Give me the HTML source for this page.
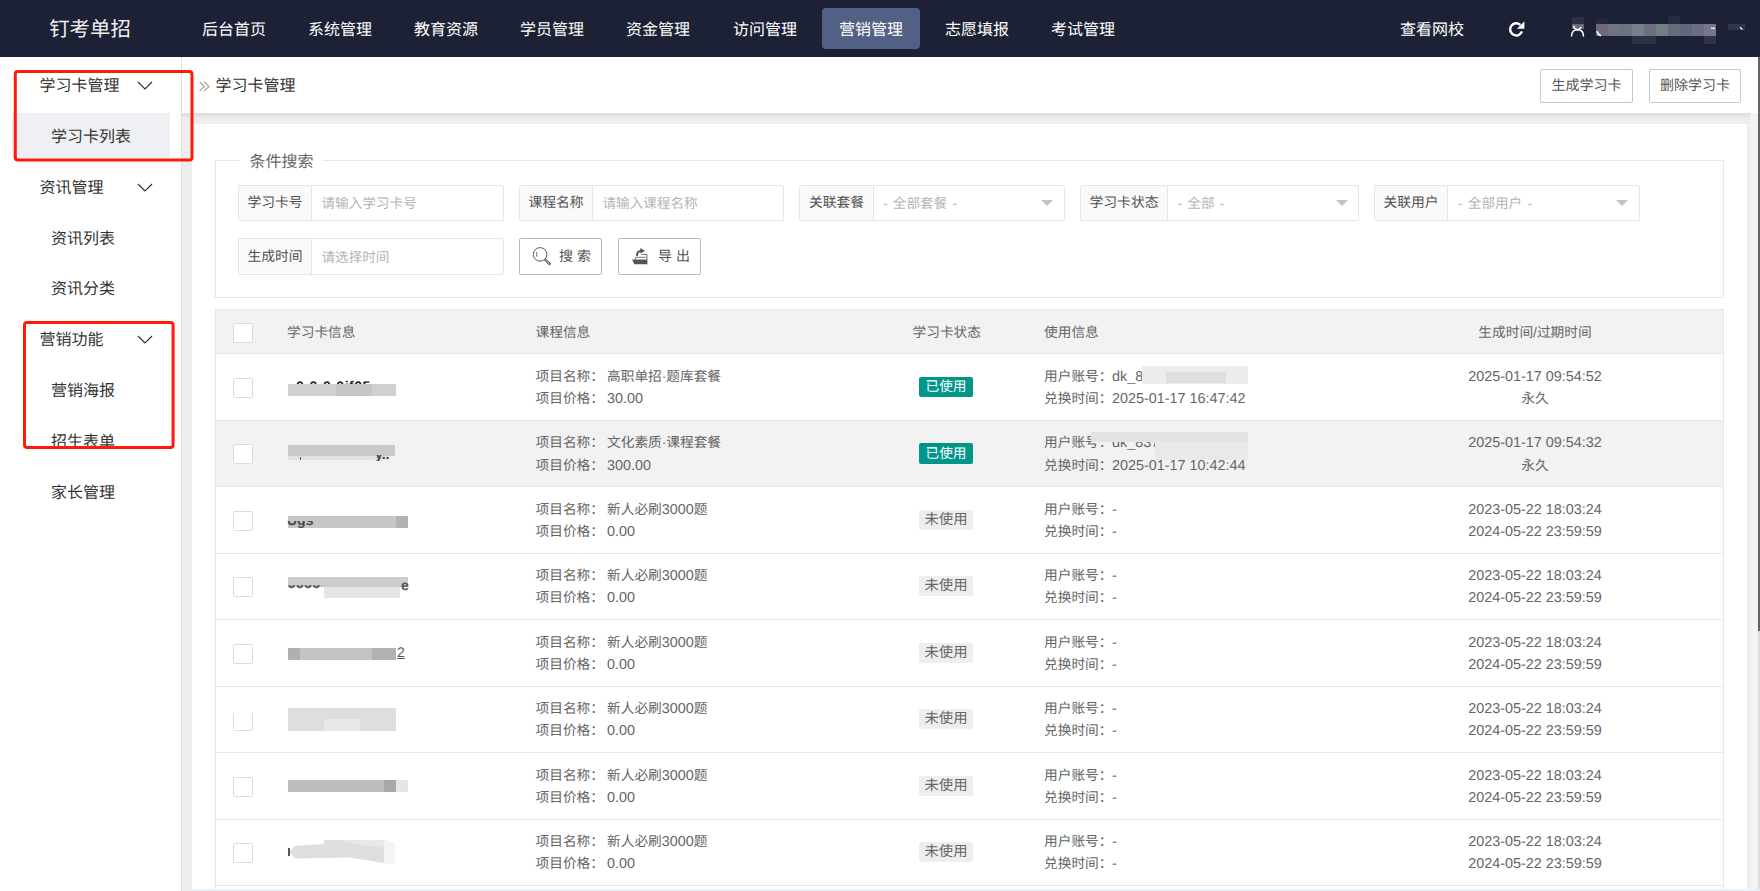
<!DOCTYPE html>
<html lang="zh-CN">
<head>
<meta charset="utf-8">
<title>学习卡管理</title>
<style>
*{box-sizing:border-box;margin:0;padding:0}
html,body{width:1760px;height:891px;overflow:hidden;background:#eee;}
body{font-family:"Liberation Sans",sans-serif;font-size:14px;color:#666;position:relative;text-rendering:geometricPrecision;}
.abs{position:absolute}
/* header */
#hdr{position:absolute;left:0;top:0;width:1760px;height:57px;background:#1d2135;}
#logo{position:absolute;left:0;top:0;width:181px;height:57px;line-height:61px;text-align:center;color:#f2f2f2;font-size:20.4px;border-right:1px solid #1a1d2f;}
.nav{position:absolute;top:8px;height:41px;width:98px;line-height:46px;text-align:center;color:#fff;font-size:16px;border-radius:4px;}
.nav.on{background:#526083;}
.hr{position:absolute;top:0;height:57px;line-height:62px;color:#fff;font-size:16px;}
/* sidebar */
#side{position:absolute;left:0;top:57px;width:181px;height:834px;background:#fff;z-index:2;}
#sideln{position:absolute;left:181px;top:57px;width:1px;height:834px;background:#dedede;z-index:2;}
.mg{z-index:3;position:absolute;left:39.5px;font-size:16px;color:#333;height:24px;line-height:24px;}
.mi{z-index:3;position:absolute;left:51px;font-size:16px;color:#333;height:24px;line-height:24px;}
.chev{z-index:3;position:absolute;left:137px;width:16px;height:9px;}
.red{position:absolute;border:2.4px solid #fb1d1d;border-radius:4px;}
/* breadcrumb */
#bc{position:absolute;left:181px;top:57px;width:1577px;height:56px;background:#fff;box-shadow:0 2px 5px rgba(0,0,0,.1);}
.tbtn{position:absolute;top:12px;height:34px;border:1px solid #c9c9c9;border-radius:2px;background:#fff;color:#555;font-size:14px;line-height:31px;text-align:center;}
/* panel */
#panel{position:absolute;left:192px;top:124px;width:1555px;height:767px;background:#fff;}
#fs{position:absolute;left:215px;top:160px;width:1509px;height:138px;border:1px solid #e6e6e6;}
#lg{position:absolute;left:240px;top:150.7px;height:24px;line-height:24px;padding:0 9.5px;background:#fff;font-size:16px;color:#666;}
.grp{position:absolute;height:36px;border:1px solid #e6e6e6;border-radius:2px;background:#fff;}
.grp .lb{position:absolute;left:0;top:0;height:34px;line-height:34.5px;text-align:center;background:#fafafa;border-right:1px solid #e6e6e6;color:#525252;font-size:13.8px;}
.grp .ph{position:absolute;top:0;height:34px;line-height:36px;color:#b4b4b4;font-size:13.6px;}
.grp .car{position:absolute;top:14px;width:0;height:0;border-left:6px solid transparent;border-right:6px solid transparent;border-top:6px solid #c2c2c2;}
.sbtn{position:absolute;top:238px;height:37px;width:83px;border:1px solid #b9b9b9;border-radius:2px;background:#fff;color:#555;font-size:14px;}
/* table */
#th{position:absolute;left:215px;top:309px;width:1509px;height:45px;background:#f2f2f2;border:1px solid #e6e6e6;}
.h{position:absolute;top:323px;height:20px;line-height:20px;font-size:13.7px;color:#666;white-space:nowrap;}
.row{position:absolute;left:215px;width:1509px;height:67.5px;border-left:1px solid #e6e6e6;border-right:1px solid #e6e6e6;border-bottom:1px solid #e6e6e6;}
.row.alt{background:#f2f2f2;}
.cb{position:absolute;left:17px;width:20px;height:20px;border:1px solid #dbdbdb;border-radius:1.5px;background:#fff;}
.t{position:absolute;height:22px;line-height:22px;font-size:13.7px;color:#666;white-space:nowrap;}
.bd{position:absolute;left:703px;width:54px;height:20px;line-height:20px;border-radius:2px;text-align:center;font-size:13.7px;}
.bd.g{background:#009688;color:#fff;}
.bd.n{background:#eee;color:#666;}
.dc{position:absolute;left:1131px;width:376px;text-align:center;height:22px;line-height:22px;font-size:13.7px;color:#666;white-space:nowrap;}
.mz{position:absolute;}
.g2 .lb,.g2 .ph{height:35px !important}
.g2 .lb{line-height:36px !important}
.g2 .ph{line-height:37px !important}
.n{font-size:14.4px}
</style>
</head>
<body>
<!-- HEADER -->
<div id="hdr">
  <div id="logo">钉考单招</div>
  <div class="nav" style="left:185px">后台首页</div>
  <div class="nav" style="left:291px">系统管理</div>
  <div class="nav" style="left:397px">教育资源</div>
  <div class="nav" style="left:503px">学员管理</div>
  <div class="nav" style="left:609px">资金管理</div>
  <div class="nav" style="left:716px">访问管理</div>
  <div class="nav on" style="left:822px">营销管理</div>
  <div class="nav" style="left:928px">志愿填报</div>
  <div class="nav" style="left:1034px">考试管理</div>
  <div class="hr" style="left:1400px">查看网校</div>
  <svg class="abs" style="left:0;top:0" width="1760" height="57" viewBox="0 0 1760 57">
    <path d="M1522.0 31.4 A6.1 6.1 0 1 1 1520.3 24.8" fill="none" stroke="#fff" stroke-width="2.4"/>
    <path d="M1524.4 21.2 V28.7 H1517 Z" fill="#fff"/>
    <rect x="1572" y="17" width="12" height="7" fill="#2b3044"/>
    <rect x="1572" y="24" width="12" height="5" fill="#676778"/>
    <path d="M1571.5 36.4 C1571.5 31.6 1574 29.7 1577.5 29.7 C1581 29.7 1583.5 31.6 1583.5 36.4" fill="none" stroke="#fff" stroke-width="1.5"/>
    <path d="M1573.6 25.8 C1574.2 28.2 1575.8 29.7 1577.5 29.7 C1579.2 29.7 1580.6 28.6 1581.2 26.8" fill="none" stroke="#fff" stroke-width="1.5"/>
    <rect x="1596" y="18" width="12" height="6" fill="#25283c"/>
    <rect x="1668" y="16" width="12" height="8" fill="#272b40"/>
    <rect x="1596" y="24" width="12" height="12" fill="#6e6878"/><rect x="1608" y="24" width="12" height="12" fill="#6f7384"/><rect x="1620" y="24" width="12" height="12" fill="#6c7380"/><rect x="1632" y="24" width="12" height="12" fill="#74808a"/><rect x="1644" y="24" width="12" height="12" fill="#6c7080"/><rect x="1656" y="24" width="12" height="12" fill="#6f8080"/><rect x="1668" y="24" width="12" height="12" fill="#676c7c"/><rect x="1680" y="24" width="12" height="12" fill="#62677a"/><rect x="1692" y="24" width="12" height="12" fill="#6a6e84"/><rect x="1704" y="24" width="12" height="12" fill="#787688"/>
    <path d="M1597 31 C1597.6 33.6 1599 35.2 1601 35.6" fill="none" stroke="#fff" stroke-width="1.6"/>
    <rect x="1632" y="36" width="24" height="8" fill="#2c3146"/>
    <rect x="1704" y="36" width="12" height="8" fill="#30344a"/>
    <rect x="1711" y="27.5" width="4" height="1.6" fill="#e8e8ee"/>
    <rect x="1728" y="24" width="17" height="6" fill="#30354a"/>
    <path d="M1740 27.2 L1742.5 29.6" stroke="#fff" stroke-width="1.2"/>
  </svg>
</div>

<!-- SIDEBAR -->
<div id="side"></div><div id="sideln"></div>
<div class="abs" style="left:12px;top:113px;width:158px;height:45px;background:#eff0f4;z-index:3"></div>
<div class="mg" style="top:75px">学习卡管理</div>
<div class="mi" style="top:125.5px">学习卡列表</div>
<div class="mg" style="top:177px">资讯管理</div>
<div class="mi" style="top:228px">资讯列表</div>
<div class="mi" style="top:278px">资讯分类</div>
<div class="mg" style="top:329px">营销功能</div>
<div class="mi" style="top:379.5px">营销海报</div>
<div class="mi" style="top:430.5px;height:15.5px;overflow:hidden">招生表单</div>
<div class="mi" style="top:481.5px">家长管理</div>
<svg class="chev" style="top:81px" viewBox="0 0 16 9"><path d="M1 1 L8 8 L15 1" fill="none" stroke="#333" stroke-width="1.2"/></svg>
<svg class="chev" style="top:183px" viewBox="0 0 16 9"><path d="M1 1 L8 8 L15 1" fill="none" stroke="#333" stroke-width="1.2"/></svg>
<svg class="chev" style="top:335px" viewBox="0 0 16 9"><path d="M1 1 L8 8 L15 1" fill="none" stroke="#333" stroke-width="1.2"/></svg>

<!-- BREADCRUMB -->
<div id="bc">
  <svg class="abs" style="left:17px;top:23px" width="14" height="13" viewBox="198 80 14 13"><path d="M199.6 82 L204.4 86.5 L199.6 91 M204.2 82 L209 86.5 L204.2 91" fill="none" stroke="#a2a2a2" stroke-width="1.1"/></svg>
  <div class="abs" style="left:34.5px;top:18px;height:24px;line-height:24px;font-size:16px;color:#333">学习卡管理</div>
  <div class="tbtn" style="left:1359px;width:93px">生成学习卡</div>
  <div class="tbtn" style="left:1468px;width:92px">删除学习卡</div>
</div>

<!-- PANEL -->
<div id="panel"></div>
<div id="fs"></div>
<div id="lg">条件搜索</div>

<div class="grp" style="left:238px;top:185px;width:266px"><div class="lb" style="width:73px">学习卡号</div><div class="ph" style="left:82.5px">请输入学习卡号</div></div>
<div class="grp" style="left:519px;top:185px;width:265px"><div class="lb" style="width:73px">课程名称</div><div class="ph" style="left:82.5px">请输入课程名称</div></div>
<div class="grp" style="left:799px;top:185px;width:266px"><div class="lb" style="width:74px">关联套餐</div><div class="ph" style="left:83px;word-spacing:1.5px">- 全部套餐 -</div><div class="car" style="left:241px"></div></div>
<div class="grp" style="left:1080px;top:185px;width:279px"><div class="lb" style="width:87px">学习卡状态</div><div class="ph" style="left:96.5px;word-spacing:1.5px">- 全部 -</div><div class="car" style="left:255px"></div></div>
<div class="grp" style="left:1374px;top:185px;width:266px"><div class="lb" style="width:73px">关联用户</div><div class="ph" style="left:83px;word-spacing:1.5px">- 全部用户 -</div><div class="car" style="left:241px"></div></div>
<div class="grp g2" style="left:238px;top:238px;width:266px;height:37px"><div class="lb" style="width:73px">生成时间</div><div class="ph" style="left:82.5px">请选择时间</div></div>

<div class="sbtn" style="left:519px">
  <div class="abs" style="left:39px;top:0;height:35px;line-height:35px;white-space:pre">搜 索</div>
</div>
<div class="sbtn" style="left:618px">
  <div class="abs" style="left:39px;top:0;height:35px;line-height:35px;white-space:pre">导 出</div>
</div>

<svg class="abs" style="left:500px;top:230px" width="220" height="50" viewBox="500 230 220 50">
  <circle cx="540.1" cy="254.4" r="6.8" fill="none" stroke="#5a5a5a" stroke-width="1"/>
  <path d="M545.4 259.9 L549.6 264" stroke="#5a5a5a" stroke-width="2.5" stroke-linecap="round"/>
  <path d="M545.6 260.1 L549.4 263.8" stroke="#fff" stroke-width="0.7" stroke-linecap="round"/>
  <path d="M536.9 252.1 Q536.1 254.4 536.9 256.7" fill="none" stroke="#5a5a5a" stroke-width="0.9"/>
  <path d="M632.1 259.5 H647.4 V264.3 H634.3 Z" fill="#555"/>
  <path d="M635.6 259.5 V257.3 H645.6" fill="none" stroke="#666" stroke-width="0.9"/>
  <path d="M641.6 254.4 H646.9 V259.5" fill="none" stroke="#666" stroke-width="1"/>
  <path d="M636.9 256 C636.9 252.6 638.6 250.9 641.2 250.9" fill="none" stroke="#555" stroke-width="2"/>
  <path d="M640.3 247.9 L644.9 250.8 L640.5 253.7 Z" fill="#555"/>
</svg>

<!-- TABLE HEADER -->
<div id="th"><div class="cb" style="top:13px"></div></div>
<div class="h" style="left:287px">学习卡信息</div>
<div class="h" style="left:535.5px">课程信息</div>
<div class="h" style="left:912.5px">学习卡状态</div>
<div class="h" style="left:1044px">使用信息</div>
<div class="h" style="left:1347px;width:376px;text-align:center">生成时间/过期时间</div>

<!-- ROWS -->
<div id="rows">
<div class="row" style="top:354px;height:67px"><div class="cb" style="top:24px"></div><div class="t" style="left:319.5px;top:11.6px">项目名称：</div><div class="t" style="left:391px;top:11.6px">高职单招·题库套餐</div><div class="t" style="left:319.5px;top:33.6px">项目价格：</div><div class="t" style="left:391px;top:33.6px"><span class="n">30.00</span></div><div class="bd g" style="top:23px">已使用</div><div class="t" style="left:828px;top:11.6px">用户账号：</div><div class="t" style="left:896px;top:11.6px"><span class="n">dk_83</span></div><div class="t" style="left:828px;top:33.6px">兑换时间：</div><div class="t" style="left:896px;top:33.6px"><span class="n">2025-01-17 16:47:42</span></div><div class="dc" style="top:11.6px"><span class="n">2025-01-17 09:54:52</span></div><div class="dc" style="top:33.6px">永久</div><div class="t" style="left:80px;top:19px;font-weight:bold;color:#222;height:11px;line-height:27px;overflow:hidden;letter-spacing:0.5px;font-size:14px">0-0-0-0if05</div><div class="mz" style="left:72px;top:30px;width:108px;height:12px;background:#d0d0d0"></div><div class="mz" style="left:120px;top:30px;width:36px;height:12px;background:#c6c6c6"></div><div class="mz" style="left:926px;top:11.5px;width:106px;height:18px;background:#ececec"></div><div class="mz" style="left:950px;top:18px;width:60px;height:11px;background:#dedede"></div></div>
<div class="row alt" style="top:421px;height:66px"><div class="cb" style="top:23px"></div><div class="t" style="left:319.5px;top:10.5px">项目名称：</div><div class="t" style="left:391px;top:10.5px">文化素质·课程套餐</div><div class="t" style="left:319.5px;top:33.5px">项目价格：</div><div class="t" style="left:391px;top:33.5px"><span class="n">300.00</span></div><div class="bd g" style="top:22px;height:21px;line-height:21px">已使用</div><div class="t" style="left:828px;top:10.5px">用户账号：</div><div class="t" style="left:896px;top:10.5px"><span class="n">dk_8370</span></div><div class="t" style="left:828px;top:33.5px">兑换时间：</div><div class="t" style="left:896px;top:33.5px"><span class="n">2025-01-17 10:42:44</span></div><div class="dc" style="top:10.5px"><span class="n">2025-01-17 09:54:32</span></div><div class="dc" style="top:33.5px">永久</div><div class="mz" style="left:72px;top:23.5px;width:107px;height:11.5px;background:#cacaca"></div><div class="mz" style="left:72px;top:35px;width:100px;height:4px;background:#e2e2e2"></div><div class="mz" style="left:159px;top:34px;width:20px;height:6px;overflow:hidden"><div style="position:absolute;left:0;top:-12px;font-weight:bold;color:#444;font-size:14px;line-height:22px;height:22px">y..</div></div><div class="mz" style="left:83.5px;top:36px;width:1.6px;height:3px;background:#555"></div><div class="mz" style="left:875px;top:11px;width:157px;height:10px;background:#e2e2e2"></div><div class="mz" style="left:939px;top:21px;width:93px;height:18px;background:#e9e9e9"></div></div>
<div class="row" style="top:487px;height:67px"><div class="cb" style="top:24px"></div><div class="t" style="left:319.5px;top:11.6px">项目名称：</div><div class="t" style="left:391px;top:11.6px">新人必刷<span class="n">3000</span>题</div><div class="t" style="left:319.5px;top:33.6px">项目价格：</div><div class="t" style="left:391px;top:33.6px"><span class="n">0.00</span></div><div class="bd n" style="top:23px">未使用</div><div class="t" style="left:828px;top:11.6px">用户账号：</div><div class="t" style="left:896px;top:11.6px"><span class="n">-</span></div><div class="t" style="left:828px;top:33.6px">兑换时间：</div><div class="t" style="left:896px;top:33.6px"><span class="n">-</span></div><div class="dc" style="top:11.6px"><span class="n">2023-05-22 18:03:24</span></div><div class="dc" style="top:33.6px"><span class="n">2024-05-22 23:59:59</span></div><div class="mz" style="left:72px;top:29px;width:108px;height:12px;background:#c6c6c6"></div><div class="mz" style="left:180px;top:29px;width:12px;height:12px;background:#b2b2b2"></div><div class="mz" style="left:71px;top:33.5px;width:30px;height:8px;overflow:hidden"><div style="position:absolute;left:0;top:-12px;font-weight:bold;color:#4a4a4a;font-size:14px;line-height:22px;height:22px">Ugs</div></div></div>
<div class="row" style="top:554px;height:66px"><div class="cb" style="top:23px"></div><div class="t" style="left:319.5px;top:10.5px">项目名称：</div><div class="t" style="left:391px;top:10.5px">新人必刷<span class="n">3000</span>题</div><div class="t" style="left:319.5px;top:33px">项目价格：</div><div class="t" style="left:391px;top:33px"><span class="n">0.00</span></div><div class="bd n" style="top:22px">未使用</div><div class="t" style="left:828px;top:10.5px">用户账号：</div><div class="t" style="left:896px;top:10.5px"><span class="n">-</span></div><div class="t" style="left:828px;top:33px">兑换时间：</div><div class="t" style="left:896px;top:33px"><span class="n">-</span></div><div class="dc" style="top:10.5px"><span class="n">2023-05-22 18:03:24</span></div><div class="dc" style="top:33px"><span class="n">2024-05-22 23:59:59</span></div><div class="mz" style="left:72px;top:23px;width:120px;height:10px;background:#cccccc"></div><div class="mz" style="left:108px;top:33px;width:76px;height:10.5px;background:#e6e6e6"></div><div class="mz" style="left:72px;top:31px;width:34px;height:5px;overflow:hidden"><div style="position:absolute;left:0;top:-13px;font-weight:bold;color:#555;font-size:14px;line-height:22px;height:22px;letter-spacing:0.5px">JJJJJ</div></div><div class="mz" style="left:185px;top:25px;width:8px;height:14px;overflow:hidden"><div style="position:absolute;left:0;top:-5px;font-weight:bold;color:#555;font-size:14px;line-height:22px;height:22px">e</div></div></div>
<div class="row" style="top:620px;height:67px"><div class="cb" style="top:24px"></div><div class="t" style="left:319.5px;top:11.6px">项目名称：</div><div class="t" style="left:391px;top:11.6px">新人必刷<span class="n">3000</span>题</div><div class="t" style="left:319.5px;top:33.6px">项目价格：</div><div class="t" style="left:391px;top:33.6px"><span class="n">0.00</span></div><div class="bd n" style="top:23px">未使用</div><div class="t" style="left:828px;top:11.6px">用户账号：</div><div class="t" style="left:896px;top:11.6px"><span class="n">-</span></div><div class="t" style="left:828px;top:33.6px">兑换时间：</div><div class="t" style="left:896px;top:33.6px"><span class="n">-</span></div><div class="dc" style="top:11.6px"><span class="n">2023-05-22 18:03:24</span></div><div class="dc" style="top:33.6px"><span class="n">2024-05-22 23:59:59</span></div><div class="mz" style="left:72px;top:28px;width:108px;height:11.5px;background:#c4c4c4"></div><div class="mz" style="left:72px;top:28px;width:12px;height:11.5px;background:#b0b0b0"></div><div class="mz" style="left:156px;top:28px;width:24px;height:11.5px;background:#b2b2b2"></div><div class="t" style="left:181px;top:20.5px;font-size:14px;color:#555;text-decoration:underline">2</div></div>
<div class="row" style="top:687px;height:66px"><div class="cb" style="top:24px"></div><div class="t" style="left:319.5px;top:10.5px">项目名称：</div><div class="t" style="left:391px;top:10.5px">新人必刷<span class="n">3000</span>题</div><div class="t" style="left:319.5px;top:33px">项目价格：</div><div class="t" style="left:391px;top:33px"><span class="n">0.00</span></div><div class="bd n" style="top:22px">未使用</div><div class="t" style="left:828px;top:10.5px">用户账号：</div><div class="t" style="left:896px;top:10.5px"><span class="n">-</span></div><div class="t" style="left:828px;top:33px">兑换时间：</div><div class="t" style="left:896px;top:33px"><span class="n">-</span></div><div class="dc" style="top:10.5px"><span class="n">2023-05-22 18:03:24</span></div><div class="dc" style="top:33px"><span class="n">2024-05-22 23:59:59</span></div><div class="mz" style="left:16px;top:13px;width:22px;height:13px;background:#fff"></div><div class="mz" style="left:72px;top:21px;width:108px;height:23px;background:#dedede"></div><div class="mz" style="left:108px;top:32px;width:36px;height:12px;background:#e8e8e8"></div></div>
<div class="row" style="top:753px;height:67px"><div class="cb" style="top:24px"></div><div class="t" style="left:319.5px;top:11.6px">项目名称：</div><div class="t" style="left:391px;top:11.6px">新人必刷<span class="n">3000</span>题</div><div class="t" style="left:319.5px;top:33.6px">项目价格：</div><div class="t" style="left:391px;top:33.6px"><span class="n">0.00</span></div><div class="bd n" style="top:23px">未使用</div><div class="t" style="left:828px;top:11.6px">用户账号：</div><div class="t" style="left:896px;top:11.6px"><span class="n">-</span></div><div class="t" style="left:828px;top:33.6px">兑换时间：</div><div class="t" style="left:896px;top:33.6px"><span class="n">-</span></div><div class="dc" style="top:11.6px"><span class="n">2023-05-22 18:03:24</span></div><div class="dc" style="top:33.6px"><span class="n">2024-05-22 23:59:59</span></div><div class="mz" style="left:72px;top:27px;width:108px;height:12px;background:#bcbcbc"></div><div class="mz" style="left:168px;top:27px;width:12px;height:12px;background:#a8a8a8"></div><div class="mz" style="left:180px;top:27px;width:12px;height:12px;background:#e6e6e6"></div></div>
<div class="row" style="top:820px;height:66px"><div class="cb" style="top:23px"></div><div class="t" style="left:319.5px;top:10.5px">项目名称：</div><div class="t" style="left:391px;top:10.5px">新人必刷<span class="n">3000</span>题</div><div class="t" style="left:319.5px;top:33px">项目价格：</div><div class="t" style="left:391px;top:33px"><span class="n">0.00</span></div><div class="bd n" style="top:22px">未使用</div><div class="t" style="left:828px;top:10.5px">用户账号：</div><div class="t" style="left:896px;top:10.5px"><span class="n">-</span></div><div class="t" style="left:828px;top:33px">兑换时间：</div><div class="t" style="left:896px;top:33px"><span class="n">-</span></div><div class="dc" style="top:10.5px"><span class="n">2023-05-22 18:03:24</span></div><div class="dc" style="top:33px"><span class="n">2024-05-22 23:59:59</span></div><svg class="mz" style="left:72px;top:20px" width="108" height="25" viewBox="0 0 108 25"><path d="M1 12 L7 6 L36 4 L36 0 L96 0 L107 3 L107 24 L96 23 L62 17.5 L7 18.5 Z" fill="#dedede"/><path d="M50 0 L96 0 L96 8 L70 4Z" fill="#e8e8e8"/><path d="M96 0 L107 3 L107 24 L96 23Z" fill="#f4f4f4"/><rect x="0" y="8" width="2" height="8" fill="#555"/></svg></div>
<div class="row" style="top:886px;height:6px;border-bottom:0"></div>
</div>
<!-- scrollbar -->
<div class="abs" style="left:1750px;top:113px;width:8px;height:778px;background:#f3f3f3"></div>
<div class="abs" style="left:1758px;top:57px;width:2px;height:574px;background:#636363"></div>
<div class="abs" style="left:1758px;top:631px;width:2px;height:260px;background:#dcdcdc"></div>
<div class="abs" style="left:0;top:889px;width:1760px;height:2px;background:#e9f1f5"></div>

<!-- RED BOXES -->
<svg class="abs" style="left:0;top:57px;z-index:5" width="200" height="400" viewBox="0 57 200 400"><rect x="15.3" y="71.4" width="176.7" height="88.6" rx="2.6" fill="none" stroke="#ff1a0a" stroke-width="3"/><rect x="24.5" y="322.5" width="148.6" height="125" rx="2.6" fill="none" stroke="#ff1a0a" stroke-width="3"/></svg>
</body>
</html>
